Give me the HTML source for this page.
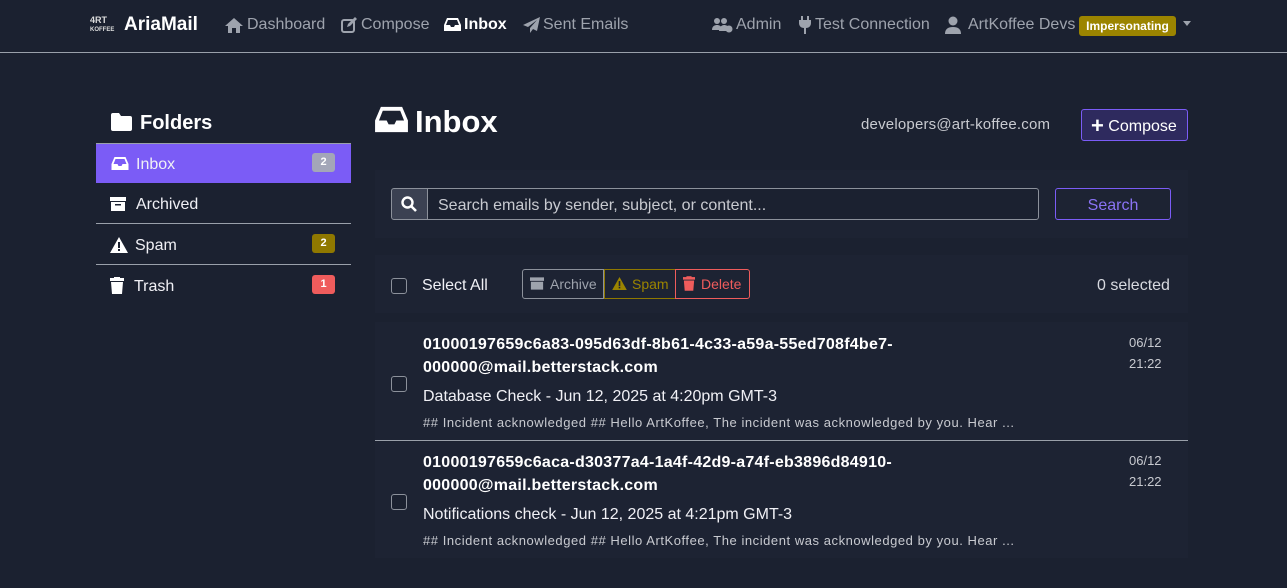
<!DOCTYPE html>
<html><head><meta charset="utf-8"><style>
*{box-sizing:border-box;margin:0;padding:0}
body{width:1287px;height:588px;background:#1b2130;font-family:"Liberation Sans",sans-serif;color:#e8e8ee;position:relative;overflow:hidden}
.a{position:absolute;white-space:nowrap}
.nav{position:absolute;left:0;top:0;width:1287px;height:53px;border-bottom:1px solid #9aa0aa}
.nl{color:#9ea3ad;font-size:16px;top:16px}
.badge{display:inline-block;border-radius:3px;font-size:11px;font-weight:bold;text-align:center}
.side div.it{position:absolute;left:96px;width:255px;height:40px;font-size:16px;color:#f0f0f5}
.cb{position:absolute;width:16px;height:16px;border:1.5px solid #8c919b;border-radius:3px;background:#1b2130}
.em{position:absolute;left:375px;width:813px;background:#1d2333}
.from{font-size:16px;font-weight:bold;color:#fff;line-height:23px;letter-spacing:0.25px}
.pv{font-size:13px;color:#c8cad0;letter-spacing:0.55px}
</style></head><body>
<div class="nav">
 <div class="a" style="left:90px;top:16px;font-size:9px;font-weight:bold;line-height:8px;color:#ddd">4RT<br><span style="font-size:6px">KOFFEE</span></div>
 <div class="a" style="left:124px;top:14px;font-size:19px;font-weight:bold;color:#fff">AriaMail</div>
 <svg class="a" style="left:224px;top:17px" width="20" height="16" viewBox="0 0 20 16"><path d="M10 1L1 9h3v7h4v-5h4v5h4V9h3z" fill="#9ea3ad"/></svg>
 <div class="a nl" style="left:247px">Dashboard</div>
 <svg class="a" style="left:341px;top:17px" width="16" height="16" viewBox="0 0 16 16"><rect x="1" y="3" width="12" height="12" rx="2" fill="none" stroke="#9ea3ad" stroke-width="2"/><path d="M6 10l1-3 7-7 2 2-7 7z" fill="#9ea3ad"/></svg>
 <div class="a nl" style="left:361px">Compose</div>
 <svg class="a" style="left:444px;top:17px" width="17" height="15" viewBox="0 0 17 15"><path d="M3 1h11l3 7v6H0V8z" fill="#fff"/><path d="M4 3h9l2 5h-4l-1 2H7L6 8H2z" fill="#1b2130"/></svg>
 <div class="a nl" style="left:464px;color:#fff;font-weight:bold">Inbox</div>
 <svg class="a" style="left:523px;top:17px" width="17" height="16" viewBox="0 0 17 16"><path d="M17 0L0 8l5 2 9-7-7 8v5l3-4 4 2z" fill="#9ea3ad"/></svg>
 <div class="a nl" style="left:543px">Sent Emails</div>
 <svg class="a" style="left:712px;top:17px" width="22" height="16" viewBox="0 0 22 16"><circle cx="5" cy="4" r="3" fill="#9ea3ad"/><circle cx="12" cy="4" r="3" fill="#9ea3ad"/><path d="M0 13c0-4 3-5 5-5s5 1 5 5zM7 14c0-4 3-6 5-6s5 1 5 4v2z" fill="#9ea3ad"/><circle cx="17" cy="12" r="3.5" fill="#9ea3ad"/></svg>
 <div class="a nl" style="left:736px">Admin</div>
 <svg class="a" style="left:799px;top:16px" width="12" height="18" viewBox="0 0 12 18"><path d="M2 0h2v4h4V0h2v4h2v3c0 3-2 5-5 5v6H5v-6C2 12 0 10 0 7V4h2z" fill="#9ea3ad"/></svg>
 <div class="a nl" style="left:815px">Test Connection</div>
 <svg class="a" style="left:945px;top:16px" width="16" height="18" viewBox="0 0 16 18"><circle cx="8" cy="5" r="4.5" fill="#9ea3ad"/><path d="M0 18c0-5 3-7 8-7s8 2 8 7z" fill="#9ea3ad"/></svg>
 <div class="a nl" style="left:968px">ArtKoffee Devs</div>
 <div class="a badge" style="left:1079px;top:16px;width:97px;height:20px;line-height:20px;background:#9b8400;color:#fff;font-size:12px">Impersonating</div>
 <div class="a" style="left:1183px;top:21px;border:4px solid transparent;border-top:5px solid #9ea3ad"></div>
</div>

<div class="side">
 <svg class="a" style="left:111px;top:113px" width="21" height="18" viewBox="0 0 21 18"><path d="M0 2a2 2 0 012-2h6l2 3h9a2 2 0 012 2v11a2 2 0 01-2 2H2a2 2 0 01-2-2z" fill="#fff"/></svg>
 <div class="a" style="left:140px;top:112px;font-size:20px;font-weight:bold;color:#fff">Folders</div>
 <div class="it" style="top:143px;background:#7b5cf6;border-top:1px solid #9aa0aa">
  <svg class="a" style="left:15px;top:12px" width="18" height="15" viewBox="0 0 17 15"><path d="M3 1h11l3 7v6H0V8z" fill="#fff"/><path d="M4 3h9l2 5h-4l-1 2H7L6 8H2z" fill="#7b5cf6"/></svg>
  <span class="a" style="left:40px;top:12px">Inbox</span>
  <span class="a badge" style="left:216px;top:9px;width:23px;height:19px;line-height:19px;background:#a3a6b8;color:#fff">2</span></div>
 <div class="it" style="top:184px;border-bottom:1px solid #9aa0aa">
  <svg class="a" style="left:14px;top:13px" width="16" height="14" viewBox="0 0 16 14"><rect x="0" y="0" width="16" height="4" fill="#fff"/><path d="M1 5h14v9H1z" fill="#fff"/><rect x="5" y="7" width="6" height="1.5" fill="#1b2130"/></svg>
  <span class="a" style="left:40px;top:12px">Archived</span></div>
 <div class="it" style="top:225px;border-bottom:1px solid #9aa0aa">
  <svg class="a" style="left:14px;top:12px" width="18" height="16" viewBox="0 0 18 16"><path d="M9 0l9 16H0z" fill="#fff"/><rect x="8" y="5" width="2" height="6" fill="#1b2130"/><rect x="8" y="12" width="2" height="2" fill="#1b2130"/></svg>
  <span class="a" style="left:39px;top:12px">Spam</span>
  <span class="a badge" style="left:216px;top:9px;width:23px;height:19px;line-height:19px;background:#8f7800;color:#fff">2</span></div>
 <div class="it" style="top:266px">
  <svg class="a" style="left:14px;top:11px" width="14" height="17" viewBox="0 0 14 17"><rect x="0" y="1" width="14" height="3" fill="#fff"/><rect x="4" y="0" width="6" height="2" fill="#fff"/><path d="M1 5h12l-1 12H2z" fill="#fff"/></svg>
  <span class="a" style="left:38px;top:12px">Trash</span>
  <span class="a badge" style="left:216px;top:9px;width:23px;height:19px;line-height:19px;background:#ef5c5c;color:#fff">1</span></div>
</div>

<svg class="a" style="left:375px;top:105px" width="33" height="29" viewBox="0 0 17 15"><path d="M3 1h11l3 7v6H0V8z" fill="#fff"/><path d="M4 3h9l2 5h-4l-1 2H7L6 8H2z" fill="#1b2130"/></svg>
<div class="a" style="left:415px;top:104px;font-size:31px;font-weight:bold;color:#fff">Inbox</div>
<div class="a" style="left:861px;top:116px;font-size:15px;color:#c8cad0;letter-spacing:0.2px">developers@art-koffee.com</div>
<div class="a" style="left:1081px;top:109px;width:107px;height:32px;border:1px solid #7b5cf6;background:#2e2a5e;border-radius:3px;color:#fff;font-size:16px;padding:7px 0 0 9px"><b style="font-size:22px;line-height:14px;position:relative;top:2px">+</b> Compose</div>

<div class="a" style="left:375px;top:170px;width:813px;height:68px;background:#1d2333"></div>
<div class="a" style="left:391px;top:188px;width:37px;height:32px;background:#3b4152;border:1px solid #8c919b;border-radius:3px 0 0 3px"></div>
<svg class="a" style="left:401px;top:196px" width="16" height="16" viewBox="0 0 16 16"><circle cx="6.5" cy="6.5" r="5" fill="none" stroke="#fff" stroke-width="2.4"/><path d="M10 10l5 5" stroke="#fff" stroke-width="2.6"/></svg>
<div class="a" style="left:427px;top:188px;width:612px;height:32px;border:1px solid #8c919b;border-radius:0 3px 3px 0;background:#1b2130;color:#c8cad0;font-size:16px;padding:8px 10px">Search emails by sender, subject, or content...</div>
<div class="a" style="left:1055px;top:188px;width:116px;height:32px;border:1px solid #7b5cf6;border-radius:3px;color:#8a73f5;font-size:16px;text-align:center;line-height:33px">Search</div>

<div class="a" style="left:375px;top:255px;width:813px;height:58px;background:#1d2333"></div>
<div class="cb" style="left:391px;top:278px"></div>
<div class="a" style="left:422px;top:277px;font-size:16px;color:#f0f0f5">Select All</div>
<div class="a" style="left:522px;top:269px;width:82px;height:30px;border:1px solid #8c919b;border-radius:3px 0 0 3px;color:#9ea3ad;font-size:14px;padding:6px 0 0 27px">Archive</div>
<svg class="a" style="left:530px;top:277px" width="14" height="13" viewBox="0 0 16 14"><rect width="16" height="4" fill="#9ea3ad"/><path d="M1 5h14v9H1z" fill="#9ea3ad"/></svg>
<div class="a" style="left:604px;top:269px;width:72px;height:30px;border:1px solid #8f7800;color:#9b8400;font-size:14px;padding:6px 0 0 27px">Spam</div>
<svg class="a" style="left:612px;top:277px" width="15" height="13" viewBox="0 0 18 16"><path d="M9 0l9 16H0z" fill="#9b8400"/><rect x="8" y="5" width="2" height="6" fill="#1d2333"/><rect x="8" y="12" width="2" height="2" fill="#1d2333"/></svg>
<div class="a" style="left:675px;top:269px;width:75px;height:30px;border:1px solid #ef5c5c;border-radius:0 3px 3px 0;color:#ef5c5c;font-size:14px;padding:6px 0 0 25px">Delete</div>
<svg class="a" style="left:683px;top:276px" width="12" height="15" viewBox="0 0 14 17"><rect x="0" y="1" width="14" height="3" fill="#ef5c5c"/><rect x="4" y="0" width="6" height="2" fill="#ef5c5c"/><path d="M1 5h12l-1 12H2z" fill="#ef5c5c"/></svg>
<div class="a" style="left:1097px;top:277px;font-size:16px;color:#d8dae0">0 selected</div>

<div class="em" style="top:322px;height:119px;border-bottom:1px solid #9aa0aa"></div>
<div class="cb" style="left:391px;top:376px"></div>
<div class="a from" style="left:423px;top:333px">01000197659c6a83-095d63df-8b61-4c33-a59a-55ed708f4be7-<br>000000@mail.betterstack.com</div>
<div class="a" style="left:423px;top:388px;font-size:16px;color:#f0f0f5">Database Check - Jun 12, 2025 at 4:20pm GMT-3</div>
<div class="a pv" style="left:423px;top:415px">## Incident acknowledged ## Hello ArtKoffee, The incident was acknowledged by you. Hear ...</div>
<div class="a" style="left:1129px;top:332px;font-size:13px;color:#c8cad0;text-align:right;line-height:21px">06/12<br>21:22</div>

<div class="em" style="top:442px;height:116px"></div>
<div class="cb" style="left:391px;top:494px"></div>
<div class="a from" style="left:423px;top:451px">01000197659c6aca-d30377a4-1a4f-42d9-a74f-eb3896d84910-<br>000000@mail.betterstack.com</div>
<div class="a" style="left:423px;top:506px;font-size:16px;color:#f0f0f5">Notifications check - Jun 12, 2025 at 4:21pm GMT-3</div>
<div class="a pv" style="left:423px;top:533px">## Incident acknowledged ## Hello ArtKoffee, The incident was acknowledged by you. Hear ...</div>
<div class="a" style="left:1129px;top:450px;font-size:13px;color:#c8cad0;text-align:right;line-height:21px">06/12<br>21:22</div>
</body></html>
